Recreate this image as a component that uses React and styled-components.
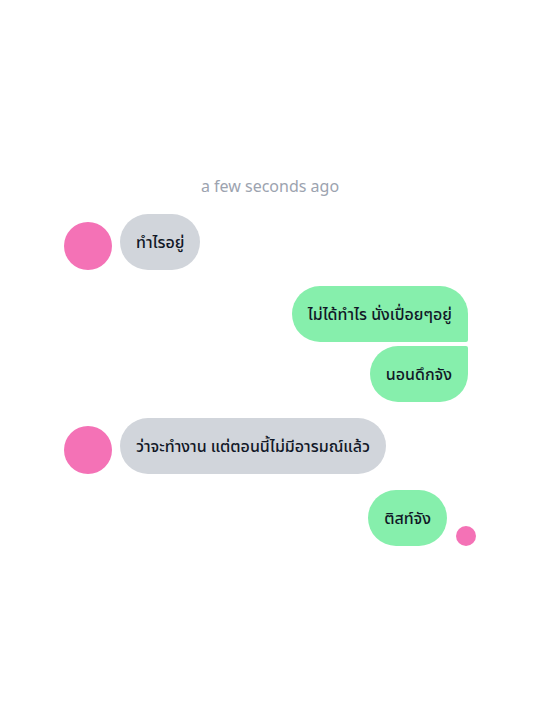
import React from "react";
import styled, { createGlobalStyle } from "styled-components";

const GlobalStyle = createGlobalStyle`
  * { box-sizing: border-box; }
  body {
    margin: 0;
    background: #ffffff;
    font-family: "Noto Sans", "Noto Sans Thai", "DejaVu Sans", sans-serif;
  }
`;

const Page = styled.div`
  min-height: 100vh;
  display: flex;
  align-items: center;
  justify-content: center;
`;

const Thread = styled.div`
  width: 412px;
  display: flex;
  flex-direction: column;
  gap: 16px;
`;

const Stamp = styled.div`
  text-align: center;
  color: #9ca3af;
  font-size: 16px;
  line-height: 24px;
`;

const Group = styled.div`
  display: flex;
  flex-direction: column;
  gap: 4px;
`;

const Row = styled.div`
  display: flex;
  align-items: flex-end;
  gap: ${(p) => (p.$mine ? "9px" : "8px")};
  justify-content: ${(p) => (p.$mine ? "flex-end" : "flex-start")};
  padding-right: ${(p) => (p.$pad ? "8px" : "0")};
`;

const Avatar = styled.div`
  width: 48px;
  height: 48px;
  border-radius: 50%;
  background: #f472b6;
  flex-shrink: 0;
`;

const Bubble = styled.div`
  padding: 16px;
  font-size: 16px;
  font-weight: 500;
  line-height: 24px;
  color: #111827;
  white-space: nowrap;
  border-radius: 28px;
  background: ${(p) => (p.$mine ? "#86efac" : "#d1d5db")};
  ${(p) => p.$tail === "bottom" && "border-bottom-right-radius: 2px;"}
  ${(p) => p.$tail === "top" && "border-top-right-radius: 2px;"}
`;

const ReadDot = styled.div`
  width: 20px;
  height: 20px;
  border-radius: 50%;
  background: #f472b6;
`;

export default function App() {
  return (
    <Page>
      <GlobalStyle />
      <Thread>
        <Stamp>a few seconds ago</Stamp>
        <Row>
          <Avatar />
          <Bubble>ทำไรอยู่</Bubble>
        </Row>
        <Group>
          <Row $mine $pad>
            <Bubble $mine $tail="bottom">ไม่ได้ทำไร นั่งเปื่อยๆอยู่</Bubble>
          </Row>
          <Row $mine $pad>
            <Bubble $mine $tail="top">นอนดึกจัง</Bubble>
          </Row>
        </Group>
        <Row>
          <Avatar />
          <Bubble>ว่าจะทำงาน แต่ตอนนี้ไม่มีอารมณ์แล้ว</Bubble>
        </Row>
        <Row $mine>
          <Bubble $mine>ติสท์จัง</Bubble>
          <ReadDot />
        </Row>
      </Thread>
    </Page>
  );
}
